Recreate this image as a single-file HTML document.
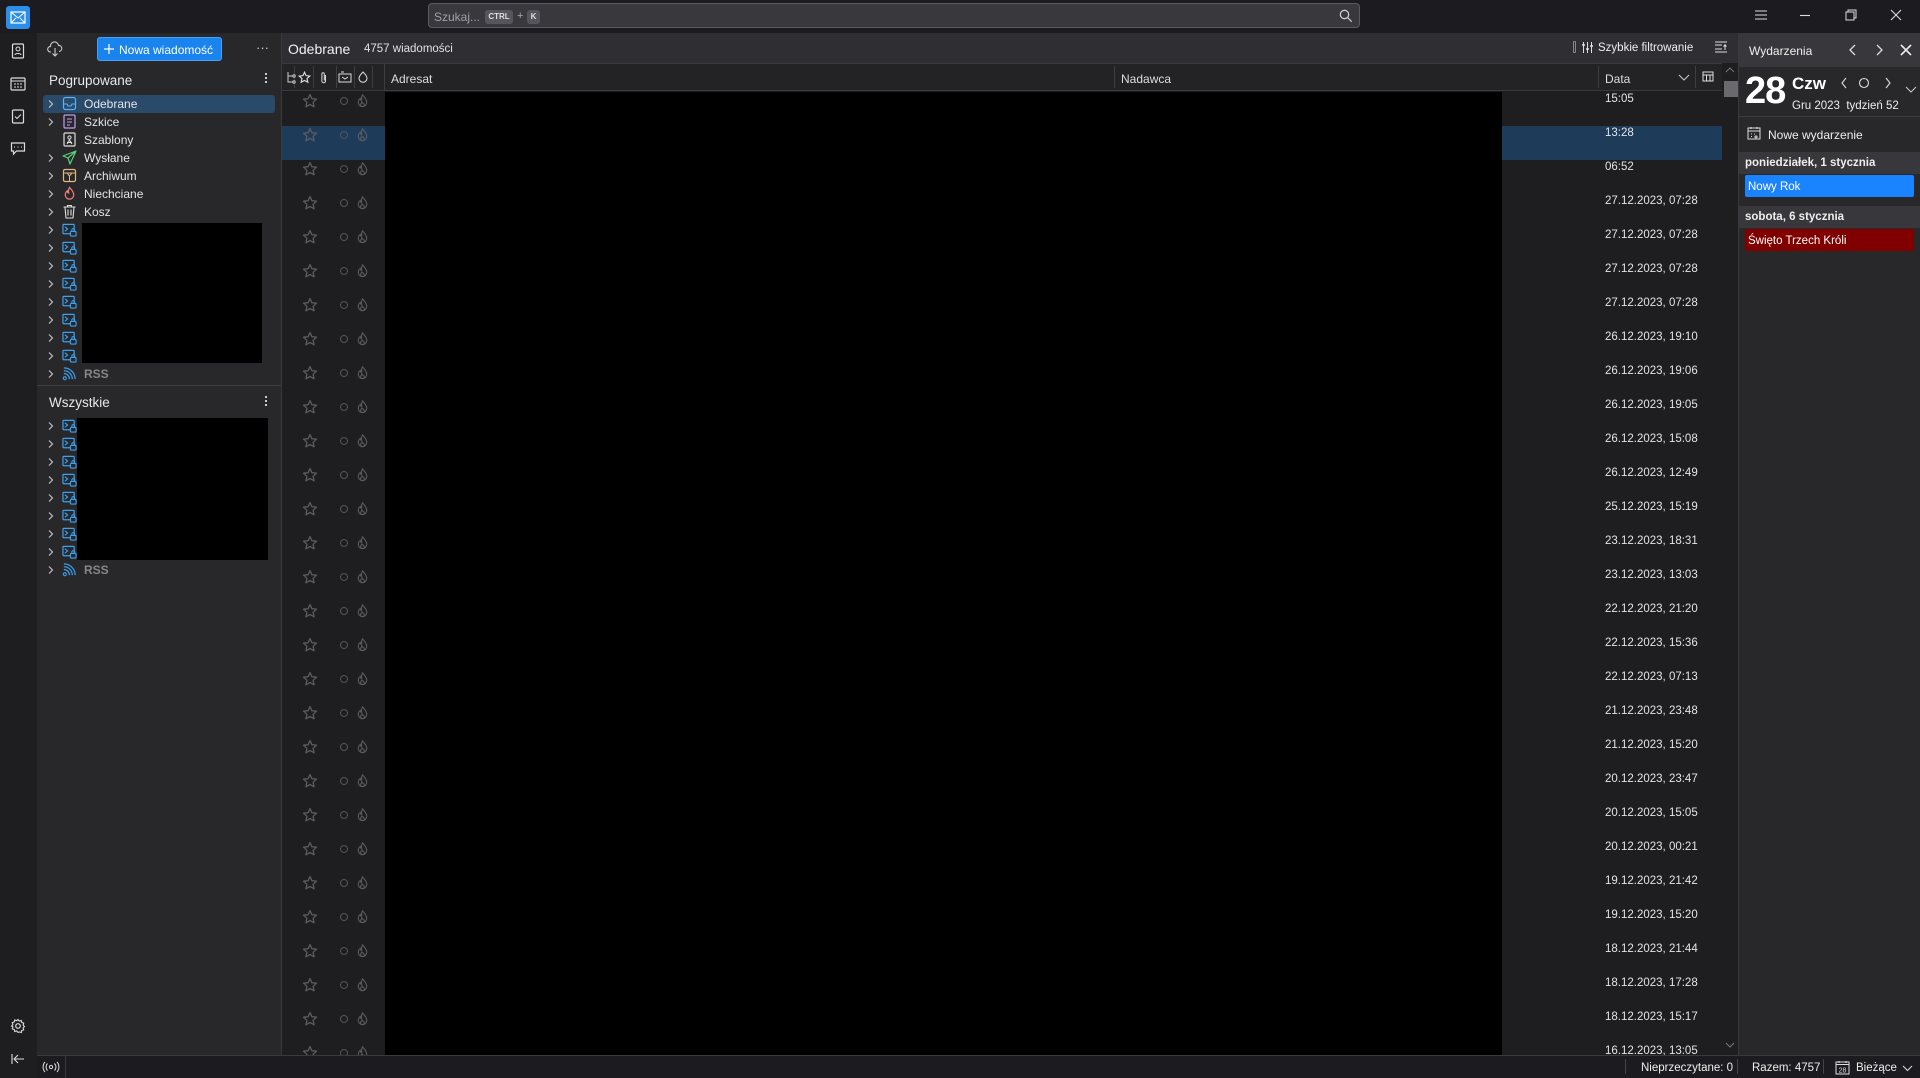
<!DOCTYPE html>
<html><head><meta charset="utf-8">
<style>
*{margin:0;padding:0;box-sizing:border-box}
body{width:1920px;height:1078px;overflow:hidden;background:#1c1b1f;font-family:"Liberation Sans",sans-serif;color:#e4e4e7;font-size:12px;position:relative}
.a{position:absolute}
.t{white-space:nowrap}
svg{display:block}
</style></head><body>
<svg width="0" height="0" style="position:absolute">
<defs>
<symbol id="star" viewBox="0 0 16 16"><path d="M8 1.5l1.9 4.2 4.6.5-3.4 3.1 1 4.5L8 11.5l-4.1 2.3 1-4.5L1.5 6.2l4.6-.5z" fill="none" stroke="#5b5b60" stroke-width="1.3" stroke-linejoin="round"/></symbol>
<symbol id="flame" viewBox="0 0 16 16"><path d="M8 1.5c2 2.3 4.5 4.4 4.5 8a4.5 4.5 0 0 1-9 0c0-2 1-3.4 2-4.3.2 1.3.8 2 1.6 2.3C6.6 5.6 7 3.5 8 1.5z M8 14c-1.3 0-2-1-2-2 0-1 .9-1.8 1.3-2.8.9 1 2.7 1.6 2.7 2.8 0 1-.8 2-2 2z" fill="none" stroke="#5b5b60" stroke-width="1.2"/></symbol>
<symbol id="acct" viewBox="0 0 16 16"><rect x="1" y="2.5" width="12" height="10" rx="1" fill="none" stroke="#3aa0f0" stroke-width="1.3"/><path d="M3 5l3 2.5L3 10" fill="none" stroke="#3aa0f0" stroke-width="1.2"/><rect x="9" y="10" width="6" height="5" rx="1" fill="#28282b" stroke="#3aa0f0" stroke-width="1.2"/><path d="M10.5 10V8.6a1.5 1.5 0 0 1 3 0V10" fill="none" stroke="#3aa0f0" stroke-width="1.1"/></symbol>
<symbol id="rss" viewBox="0 0 16 16"><circle cx="3" cy="13" r="1.6" fill="none" stroke="#3aa0f0" stroke-width="1.2"/><path d="M2 8a6 6 0 0 1 6 6M2 5a9 9 0 0 1 9 9M2 2a12 12 0 0 1 12 12" fill="none" stroke="#3aa0f0" stroke-width="1.3"/></symbol>
<symbol id="chev" viewBox="0 0 10 10"><path d="M3 1.5L6.5 5 3 8.5" fill="none" stroke="#c8c8cc" stroke-width="1.1"/></symbol>
</defs></svg>

<!-- top bar -->
<div class="a" style="left:0;top:0;width:1920px;height:33px;background:#1c1b1f"></div>
<div class="a" style="left:428px;top:3px;width:932px;height:25px;background:#38383d;border:1px solid #5a5a60;border-radius:4px"></div>
<div class="a t" style="left:434px;top:10px;color:#a0a0a8;font-size:12px">Szukaj...</div>
<div class="a t" style="left:485px;top:10px;width:28px;height:14px;background:#55555b;border-radius:3px;font-size:8px;font-weight:bold;color:#ddd;text-align:center;line-height:14px">CTRL</div>
<div class="a t" style="left:517px;top:10px;color:#aaa;font-size:11px">+</div>
<div class="a t" style="left:527px;top:10px;width:13px;height:14px;background:#55555b;border-radius:3px;font-size:8px;font-weight:bold;color:#ddd;text-align:center;line-height:14px">K</div>
<svg class="a" style="left:1339px;top:9px" width="14" height="14" viewBox="0 0 14 14"><circle cx="5.5" cy="5.5" r="4.2" fill="none" stroke="#ccc" stroke-width="1.3"/><path d="M8.7 8.7l4 4" stroke="#ccc" stroke-width="1.3"/></svg>
<svg class="a" style="left:1754px;top:9px" width="14" height="12"><path d="M1 2h12M1 6h12M1 10h12" stroke="#ddd" stroke-width="1.1"/></svg>
<svg class="a" style="left:1799px;top:9px" width="12" height="12"><path d="M1 6.5h10" stroke="#ddd" stroke-width="1.1"/></svg>
<svg class="a" style="left:1845px;top:9px" width="12" height="12"><rect x="1" y="3" width="8" height="8" fill="none" stroke="#ddd"/><path d="M3 3V1h8v8H9" fill="none" stroke="#ddd"/></svg>
<svg class="a" style="left:1890px;top:9px" width="12" height="12"><path d="M1 1l10 10M11 1L1 11" stroke="#ddd" stroke-width="1.1"/></svg>

<!-- spaces bar -->
<div class="a" style="left:0;top:33px;width:37px;height:1045px;background:#1e1e21"></div>
<div class="a" style="left:6px;top:6px;width:24px;height:23px;background:#2b8ee8;border-radius:3px"></div>
<svg class="a" style="left:10px;top:11px" width="16" height="13"><rect x="1" y="1" width="14" height="11" fill="none" stroke="#fff" stroke-width="1.2"/><path d="M1 1l7 6 7-6M1 12l5-5M15 12l-5-5" fill="none" stroke="#fff" stroke-width="1"/></svg>
<svg class="a" style="left:11px;top:43px" width="14" height="16"><rect x="1.5" y="1" width="11" height="14" rx="1" fill="none" stroke="#ddd" stroke-width="1.2"/><circle cx="7" cy="6" r="2" fill="none" stroke="#ddd"/><path d="M4 12c0-2 6-2 6 0" fill="none" stroke="#ddd"/></svg>
<svg class="a" style="left:10px;top:76px" width="16" height="15"><rect x="1" y="2" width="14" height="12" rx="1" fill="none" stroke="#ddd" stroke-width="1.2"/><path d="M1 5h14M4 8h2M7 8h2M10 8h2M4 11h2M7 11h2M10 11h2" stroke="#ddd"/></svg>
<svg class="a" style="left:11px;top:108px" width="14" height="16"><rect x="1.5" y="2" width="11" height="13" rx="1" fill="none" stroke="#ddd" stroke-width="1.2"/><path d="M4 8.5l2 2 4-4" fill="none" stroke="#ddd"/></svg>
<svg class="a" style="left:10px;top:141px" width="16" height="16"><path d="M1.5 2h13v8h-8l-3 3v-3h-2z" fill="none" stroke="#ddd" stroke-width="1.2"/><path d="M4 6h1M7.5 6h1M11 6h1" stroke="#ddd"/></svg>
<svg class="a" style="left:10px;top:1018px" width="16" height="16" viewBox="0 0 16 16"><circle cx="8" cy="8" r="2.3" fill="none" stroke="#ddd" stroke-width="1.2"/><path d="M8 1.5l1.3 1.6 2-.6.4 2 2 .6-.6 2 1.4 1.4-1.4 1.4.6 2-2 .6-.4 2-2-.6L8 14.5l-1.3-1.6-2 .6-.4-2-2-.6.6-2L1.5 8l1.4-1.4-.6-2 2-.6.4-2 2 .6z" fill="none" stroke="#ddd" stroke-width="1.1"/></svg>
<svg class="a" style="left:11px;top:1053px" width="14" height="12"><path d="M1 1v10M13 6H3M7 2L3 6l4 4" fill="none" stroke="#ddd" stroke-width="1.1"/></svg>

<!-- folder pane -->
<div class="a" style="left:37px;top:33px;width:244px;height:1022px;background:#28282b"></div>
<div class="a" style="left:281px;top:33px;width:1px;height:1022px;background:#3a3a3e"></div>
<svg class="a" style="left:47px;top:41px" width="16" height="16"><path d="M4 11H3.5a2.8 2.8 0 0 1 0-5.6A4 4 0 0 1 11.5 4.5a3 3 0 0 1 1 5.9H12" fill="none" stroke="#ccc" stroke-width="1.1"/><path d="M8 7v8M5.5 12.5L8 15l2.5-2.5" fill="none" stroke="#ccc" stroke-width="1.1"/></svg>
<div class="a" style="left:97px;top:37px;width:125px;height:24px;background:#1a84ee;border:1px solid #4aa0f5;border-radius:3px"></div>
<svg class="a" style="left:103px;top:43px" width="12" height="12"><path d="M6 1v10M1 6h10" stroke="#fff" stroke-width="1.2"/></svg>
<div class="a t" style="left:119px;top:43px;font-size:12px;color:#fff">Nowa wiadomość</div>
<div class="a t" style="left:256px;top:40px;font-size:13px;color:#ccc">···</div>
<div class="a t" style="left:49px;top:73px;font-size:13.5px;color:#e8e8ec">Pogrupowane</div>
<div class="a" style="left:265px;top:73px;width:2px;height:2px;background:#ccc;box-shadow:0 4px #ccc,0 8px #ccc"></div>
<div class="a" style="left:43px;top:95px;width:232px;height:18px;background:#2a4a6a;border-radius:3px"></div>

<div class="a" style="left:46px;top:99px"><svg width="10" height="10"><use href="#chev"/></svg></div>
<svg class="a" style="left:62px;top:96px" width="15" height="15"><rect x="1.5" y="1.5" width="12" height="12" rx="2" fill="none" stroke="#5fb0f5" stroke-width="1.2"/><path d="M1.5 8h3.5l1 2h3l1-2h3.5" fill="none" stroke="#5fb0f5" stroke-width="1.1"/></svg>
<div class="a t" style="left:84px;top:97px;font-size:12px">Odebrane</div>

<div class="a" style="left:46px;top:117px"><svg width="10" height="10"><use href="#chev"/></svg></div>
<svg class="a" style="left:62px;top:114px" width="15" height="15"><rect x="2" y="1" width="11" height="13" rx="1" fill="none" stroke="#c29cf0" stroke-width="1.2"/><path d="M5 5h5M5 8h5M5 11h3" stroke="#c29cf0"/></svg>
<div class="a t" style="left:84px;top:115px;font-size:12px">Szkice</div>

<svg class="a" style="left:62px;top:132px" width="15" height="15"><rect x="2" y="1" width="11" height="13" rx="1" fill="none" stroke="#ddd" stroke-width="1.2"/><circle cx="7.5" cy="5.5" r="1.6" fill="none" stroke="#ddd"/><path d="M5 12l2.5-4 2.5 4M5 10.5h5" fill="none" stroke="#ddd"/></svg>
<div class="a t" style="left:84px;top:133px;font-size:12px">Szablony</div>

<div class="a" style="left:46px;top:153px"><svg width="10" height="10"><use href="#chev"/></svg></div>
<svg class="a" style="left:62px;top:150px" width="15" height="15"><path d="M14 1L1 6l5 2 2 6z M6 8l8-7" fill="none" stroke="#5ad07a" stroke-width="1.2" stroke-linejoin="round"/></svg>
<div class="a t" style="left:84px;top:151px;font-size:12px">Wysłane</div>

<div class="a" style="left:46px;top:171px"><svg width="10" height="10"><use href="#chev"/></svg></div>
<svg class="a" style="left:62px;top:168px" width="15" height="15"><rect x="1.5" y="1.5" width="12" height="12" rx="1.5" fill="none" stroke="#e0b880" stroke-width="1.2"/><path d="M1.5 5h12M5 5l2.5 3 2.5-3M7.5 8v5" fill="none" stroke="#e0b880"/></svg>
<div class="a t" style="left:84px;top:169px;font-size:12px">Archiwum</div>

<div class="a" style="left:46px;top:189px"><svg width="10" height="10"><use href="#chev"/></svg></div>
<svg class="a" style="left:62px;top:186px" width="15" height="15" viewBox="0 0 16 16"><path d="M8 1.5c2 2.3 4.5 4.4 4.5 8a4.5 4.5 0 0 1-9 0c0-2 1-3.4 2-4.3.2 1.3.8 2 1.6 2.3C6.6 5.6 7 3.5 8 1.5z" fill="none" stroke="#f08080" stroke-width="1.3"/></svg>
<div class="a t" style="left:84px;top:187px;font-size:12px">Niechciane</div>

<div class="a" style="left:46px;top:207px"><svg width="10" height="10"><use href="#chev"/></svg></div>
<svg class="a" style="left:62px;top:204px" width="15" height="15"><path d="M1.5 3h12M5.5 3V1.5h4V3M3 3l1 11h7l1-11M6 5.5v6M9 5.5v6" fill="none" stroke="#ddd" stroke-width="1.1"/></svg>
<div class="a t" style="left:84px;top:205px;font-size:12px">Kosz</div>

<div class="a" style="left:46px;top:225px"><svg width="10" height="10"><use href="#chev"/></svg></div><svg class="a" style="left:62px;top:222px" width="15" height="15"><use href="#acct"/></svg>
<div class="a" style="left:46px;top:243px"><svg width="10" height="10"><use href="#chev"/></svg></div><svg class="a" style="left:62px;top:240px" width="15" height="15"><use href="#acct"/></svg>
<div class="a" style="left:46px;top:261px"><svg width="10" height="10"><use href="#chev"/></svg></div><svg class="a" style="left:62px;top:258px" width="15" height="15"><use href="#acct"/></svg>
<div class="a" style="left:46px;top:279px"><svg width="10" height="10"><use href="#chev"/></svg></div><svg class="a" style="left:62px;top:276px" width="15" height="15"><use href="#acct"/></svg>
<div class="a" style="left:46px;top:297px"><svg width="10" height="10"><use href="#chev"/></svg></div><svg class="a" style="left:62px;top:294px" width="15" height="15"><use href="#acct"/></svg>
<div class="a" style="left:46px;top:315px"><svg width="10" height="10"><use href="#chev"/></svg></div><svg class="a" style="left:62px;top:312px" width="15" height="15"><use href="#acct"/></svg>
<div class="a" style="left:46px;top:333px"><svg width="10" height="10"><use href="#chev"/></svg></div><svg class="a" style="left:62px;top:330px" width="15" height="15"><use href="#acct"/></svg>
<div class="a" style="left:46px;top:351px"><svg width="10" height="10"><use href="#chev"/></svg></div><svg class="a" style="left:62px;top:348px" width="15" height="15"><use href="#acct"/></svg>
<div class="a" style="left:82px;top:223px;width:180px;height:140px;background:#000"></div>
<div class="a" style="left:46px;top:369px"><svg width="10" height="10"><use href="#chev"/></svg></div><svg class="a" style="left:62px;top:366px" width="15" height="15"><use href="#rss"/></svg>
<div class="a t" style="left:84px;top:367px;font-size:12px;font-weight:bold;color:#85858b">RSS</div>

<div class="a" style="left:37px;top:385px;width:244px;height:1px;background:#3e3e42"></div>
<div class="a t" style="left:49px;top:395px;font-size:13.5px;color:#e8e8ec">Wszystkie</div>
<div class="a" style="left:265px;top:396px;width:2px;height:2px;background:#ccc;box-shadow:0 4px #ccc,0 8px #ccc"></div>

<div class="a" style="left:46px;top:421px"><svg width="10" height="10"><use href="#chev"/></svg></div><svg class="a" style="left:62px;top:418px" width="15" height="15"><use href="#acct"/></svg>
<div class="a" style="left:46px;top:439px"><svg width="10" height="10"><use href="#chev"/></svg></div><svg class="a" style="left:62px;top:436px" width="15" height="15"><use href="#acct"/></svg>
<div class="a" style="left:46px;top:457px"><svg width="10" height="10"><use href="#chev"/></svg></div><svg class="a" style="left:62px;top:454px" width="15" height="15"><use href="#acct"/></svg>
<div class="a" style="left:46px;top:475px"><svg width="10" height="10"><use href="#chev"/></svg></div><svg class="a" style="left:62px;top:472px" width="15" height="15"><use href="#acct"/></svg>
<div class="a" style="left:46px;top:493px"><svg width="10" height="10"><use href="#chev"/></svg></div><svg class="a" style="left:62px;top:490px" width="15" height="15"><use href="#acct"/></svg>
<div class="a" style="left:46px;top:511px"><svg width="10" height="10"><use href="#chev"/></svg></div><svg class="a" style="left:62px;top:508px" width="15" height="15"><use href="#acct"/></svg>
<div class="a" style="left:46px;top:529px"><svg width="10" height="10"><use href="#chev"/></svg></div><svg class="a" style="left:62px;top:526px" width="15" height="15"><use href="#acct"/></svg>
<div class="a" style="left:46px;top:547px"><svg width="10" height="10"><use href="#chev"/></svg></div><svg class="a" style="left:62px;top:544px" width="15" height="15"><use href="#acct"/></svg>
<div class="a" style="left:77px;top:418px;width:191px;height:142px;background:#000"></div>
<div class="a" style="left:46px;top:565px"><svg width="10" height="10"><use href="#chev"/></svg></div><svg class="a" style="left:62px;top:562px" width="15" height="15"><use href="#rss"/></svg>
<div class="a t" style="left:84px;top:563px;font-size:12px;font-weight:bold;color:#85858b">RSS</div>

<!-- thread pane -->
<div class="a" style="left:282px;top:33px;width:1456px;height:30px;background:#2f2f33"></div>
<div class="a t" style="left:288px;top:41px;font-size:14px;color:#f0f0f4">Odebrane</div>
<div class="a t" style="left:364px;top:43px;font-size:11.5px;color:#e0e0e4">4757 wiadomości</div>
<div class="a" style="left:1573px;top:41px;width:3px;height:12px;border:1px solid #888;border-radius:1px"></div>
<svg class="a" style="left:1581px;top:41px" width="13" height="13"><path d="M2.5 1v11M6.5 1v11M10.5 1v11" stroke="#ddd"/><path d="M1 4h3M5 8h3M9 5h3" stroke="#ddd" stroke-width="1.5"/></svg>
<div class="a t" style="left:1598px;top:42px;font-size:11.5px;color:#eee">Szybkie filtrowanie</div>
<svg class="a" style="left:1714px;top:40px" width="14" height="14"><path d="M1 2h12M1 12h12M1 5h7M1 9h7" stroke="#ddd"/><path d="M11 4v6M9.5 6.5l1.5-1.5 1.5 1.5" fill="none" stroke="#ddd"/></svg>

<div class="a" style="left:282px;top:63px;width:1456px;height:28px;background:#232326;border-top:1px solid #3a3a3e;border-bottom:1px solid #3a3a3e"></div>
<div class="a" style="left:294px;top:66px;width:1px;height:22px;background:#3e3e42"></div>
<div class="a" style="left:313px;top:66px;width:1px;height:22px;background:#3e3e42"></div>
<div class="a" style="left:336px;top:66px;width:1px;height:22px;background:#3e3e42"></div>
<div class="a" style="left:354px;top:66px;width:1px;height:22px;background:#3e3e42"></div>
<div class="a" style="left:372px;top:66px;width:1px;height:22px;background:#3e3e42"></div>
<div class="a" style="left:384px;top:64px;width:1px;height:27px;background:#3e3e42"></div>
<svg class="a" style="left:286px;top:71px" width="10" height="13"><path d="M2 1v10h5M2 5h5" fill="none" stroke="#ccc"/><circle cx="8" cy="5" r="1.2" fill="none" stroke="#ccc"/><circle cx="8" cy="11" r="1.2" fill="none" stroke="#ccc"/></svg>
<svg class="a" style="left:298px;top:71px" width="13" height="13" viewBox="0 0 16 16"><path d="M8 1.5l1.9 4.2 4.6.5-3.4 3.1 1 4.5L8 11.5l-4.1 2.3 1-4.5L1.5 6.2l4.6-.5z" fill="none" stroke="#ddd" stroke-width="1.4"/></svg>
<svg class="a" style="left:320px;top:71px" width="8" height="13"><path d="M5.5 4v6a1.8 1.8 0 0 1-3.6 0V3a1.2 1.2 0 0 1 2.4 0v6.5" fill="none" stroke="#ddd"/></svg>
<svg class="a" style="left:338px;top:71px" width="14" height="12"><rect x="1" y="3" width="12" height="8" fill="none" stroke="#ddd"/><path d="M3 1h3M4 6l3 2 3-2" fill="none" stroke="#ddd"/></svg>
<svg class="a" style="left:357px;top:71px" width="12" height="12"><path d="M6 1c1.5 1.8 4 3.5 4 6.3a4 4 0 0 1-8 0C2 5 4 3 6 1z" fill="none" stroke="#ddd"/></svg>
<div class="a t" style="left:391px;top:72px;font-size:12px;color:#ddd">Adresat</div>
<div class="a" style="left:1114px;top:66px;width:1px;height:22px;background:#3e3e42"></div>
<div class="a t" style="left:1121px;top:72px;font-size:12px;color:#ddd">Nadawca</div>
<div class="a" style="left:1598px;top:66px;width:1px;height:22px;background:#3e3e42"></div>
<div class="a t" style="left:1605px;top:72px;font-size:12px;color:#ddd">Data</div>
<svg class="a" style="left:1678px;top:74px" width="12" height="8"><path d="M1 1l5 5 5-5" fill="none" stroke="#ccc"/></svg>
<div class="a" style="left:1695px;top:66px;width:1px;height:22px;background:#3e3e42"></div>
<svg class="a" style="left:1702px;top:71px" width="12" height="12"><rect x="1" y="1" width="10" height="9" fill="none" stroke="#ddd"/><path d="M1 4h10M4.5 4v6M8 4v6" stroke="#ddd"/></svg>

<div class="a" style="left:282px;top:92px;width:1440px;height:963px;background:#1e1e21;overflow:hidden">
<div class="a" style="left:0;top:34px;width:1440px;height:34px;background:#1e3c5a"></div>
<div id="rows"></div>
</div>

<div class="a" style="left:1722px;top:63px;width:16px;height:992px;background:#1e1e21"></div>
<svg class="a" style="left:1725px;top:67px" width="10" height="7"><path d="M1 5l4-4 4 4" fill="none" stroke="#777"/></svg>
<div class="a" style="left:1724px;top:81px;width:14px;height:16px;background:#6a6a6e"></div>
<svg class="a" style="left:1725px;top:1042px" width="10" height="7"><path d="M1 1l4 4 4-4" fill="none" stroke="#777"/></svg>

<!-- calendar pane -->
<div class="a" style="left:1738px;top:33px;width:1px;height:1022px;background:#3a3a3e"></div>
<div class="a" style="left:1739px;top:33px;width:181px;height:1022px;background:#28282b"></div>
<div class="a" style="left:1739px;top:33px;width:181px;height:34px;background:#38383c"></div>
<div class="a t" style="left:1749px;top:44px;font-size:12px;color:#eee">Wydarzenia</div>
<svg class="a" style="left:1848px;top:44px" width="10" height="12"><path d="M7 1L2 6l5 5" fill="none" stroke="#ddd" stroke-width="1.3"/></svg>
<svg class="a" style="left:1874px;top:44px" width="10" height="12"><path d="M3 1l5 5-5 5" fill="none" stroke="#ddd" stroke-width="1.3"/></svg>
<svg class="a" style="left:1900px;top:44px" width="12" height="12"><path d="M1 1l10 10M11 1L1 11" stroke="#eee" stroke-width="1.6"/></svg>
<div class="a t" style="left:1745px;top:70px;font-size:38px;font-weight:bold;color:#fff;letter-spacing:-1px">28</div>
<div class="a t" style="left:1792px;top:74px;font-size:17px;font-weight:bold;color:#fff">Czw</div>
<svg class="a" style="left:1840px;top:77px" width="8" height="12"><path d="M6 1L2 6l4 5" fill="none" stroke="#ddd" stroke-width="1.1"/></svg>
<svg class="a" style="left:1858px;top:77px" width="12" height="12"><circle cx="6" cy="6" r="4.5" fill="none" stroke="#ddd" stroke-width="1.1"/></svg>
<svg class="a" style="left:1884px;top:77px" width="8" height="12"><path d="M2 1l4 5-4 5" fill="none" stroke="#ddd" stroke-width="1.1"/></svg>
<svg class="a" style="left:1905px;top:86px" width="12" height="8"><path d="M1 1l5 5 5-5" fill="none" stroke="#ccc"/></svg>
<div class="a t" style="left:1792px;top:100px;font-size:11.5px;color:#eee">Gru 2023&nbsp; tydzień 52</div>
<div class="a" style="left:1739px;top:116px;width:181px;height:1px;background:#3e3e42"></div>
<svg class="a" style="left:1747px;top:126px" width="14" height="14"><rect x="1" y="2" width="12" height="11" fill="none" stroke="#ddd"/><path d="M1 5h12M4 1v2M10 1v2M4 8h1M7 8h1M4 10.5h1M9 9v4M7 11h4" stroke="#ddd"/></svg>
<div class="a t" style="left:1768px;top:128px;font-size:12px;color:#eee">Nowe wydarzenie</div>
<div class="a" style="left:1739px;top:152px;width:181px;height:22px;background:#38383c"></div>
<div class="a t" style="left:1745px;top:157px;font-size:11.5px;font-weight:bold;color:#eee">poniedziałek, 1 stycznia</div>
<div class="a" style="left:1745px;top:175px;width:169px;height:22px;background:#1a84ff;border-radius:2px"></div>
<div class="a t" style="left:1748px;top:181px;font-size:11.5px;color:#fff">Nowy Rok</div>
<div class="a" style="left:1739px;top:206px;width:181px;height:22px;background:#38383c"></div>
<div class="a t" style="left:1745px;top:211px;font-size:11.5px;font-weight:bold;color:#eee">sobota, 6 stycznia</div>
<div class="a" style="left:1745px;top:229px;width:169px;height:22px;background:#800000;border-radius:2px"></div>
<div class="a t" style="left:1748px;top:235px;font-size:11.5px;color:#fff">Święto Trzech Króli</div>

<!-- status bar -->
<div class="a" style="left:37px;top:1055px;width:1883px;height:23px;background:#1c1b1f;border-top:1px solid #3a3a3e"></div>
<svg class="a" style="left:42px;top:1061px" width="18" height="12"><circle cx="9" cy="6" r="1.6" fill="none" stroke="#ddd"/><path d="M5.5 2.5a5 5 0 0 0 0 7M12.5 2.5a5 5 0 0 1 0 7M3 1a7.5 7.5 0 0 0 0 10M15 1a7.5 7.5 0 0 1 0 10" fill="none" stroke="#ddd"/></svg>
<div class="a" style="left:65px;top:1056px;width:1px;height:22px;background:#3a3a3e"></div>
<div class="a" style="left:1625px;top:1059px;width:1px;height:15px;background:#444"></div>
<div class="a t" style="left:1641px;top:1062px;font-size:11.5px;color:#eee">Nieprzeczytane: 0</div>
<div class="a" style="left:1737px;top:1059px;width:1px;height:15px;background:#444"></div>
<div class="a t" style="left:1752px;top:1062px;font-size:11.5px;color:#eee">Razem: 4757</div>
<div class="a" style="left:1823px;top:1059px;width:1px;height:15px;background:#444"></div>
<svg class="a" style="left:1835px;top:1060px" width="15" height="15"><rect x="1" y="2" width="13" height="12" fill="none" stroke="#ddd"/><path d="M1 4.5h13M4 1v2M11 1v2" stroke="#ddd"/><text x="7.5" y="12.5" font-size="7" font-family="Liberation Sans" fill="#ddd" text-anchor="middle">28</text></svg>
<div class="a t" style="left:1856px;top:1062px;font-size:11.5px;color:#eee">Bieżące</div>
<svg class="a" style="left:1902px;top:1065px" width="11" height="7"><path d="M1 1l4.5 4.5L10 1" fill="none" stroke="#ddd"/></svg>

<script>
var d=["15:05","13:28","06:52","27.12.2023, 07:28","27.12.2023, 07:28","27.12.2023, 07:28","27.12.2023, 07:28","26.12.2023, 19:10","26.12.2023, 19:06","26.12.2023, 19:05","26.12.2023, 15:08","26.12.2023, 12:49","25.12.2023, 15:19","23.12.2023, 18:31","23.12.2023, 13:03","22.12.2023, 21:20","22.12.2023, 15:36","22.12.2023, 07:13","21.12.2023, 23:48","21.12.2023, 15:20","20.12.2023, 23:47","20.12.2023, 15:05","20.12.2023, 00:21","19.12.2023, 21:42","19.12.2023, 15:20","18.12.2023, 21:44","18.12.2023, 17:28","18.12.2023, 15:17","16.12.2023, 13:05"];
var h="";
for(var i=0;i<d.length;i++){var y=i*34;
h+='<svg class="a" style="left:20px;top:'+(y+1)+'px" width="16" height="16"><use href="#star"/></svg>'+
'<div class="a" style="left:58px;top:'+(y+5)+'px;width:8px;height:8px;border-radius:50%;border:1.2px solid #55555a"></div>'+
'<svg class="a" style="left:73px;top:'+(y+1)+'px" width="15" height="16" viewBox="0 0 16 16"><use href="#flame"/></svg>'+
'<div class="a t" style="left:1323px;top:'+(y+1)+'px;font-size:11.5px;color:#e4e4e8">'+d[i]+'</div>';}
h+='<div class="a" style="left:103px;top:0;width:1117px;height:963px;background:#000"></div>';
document.getElementById("rows").innerHTML=h;
</script>
</body></html>
